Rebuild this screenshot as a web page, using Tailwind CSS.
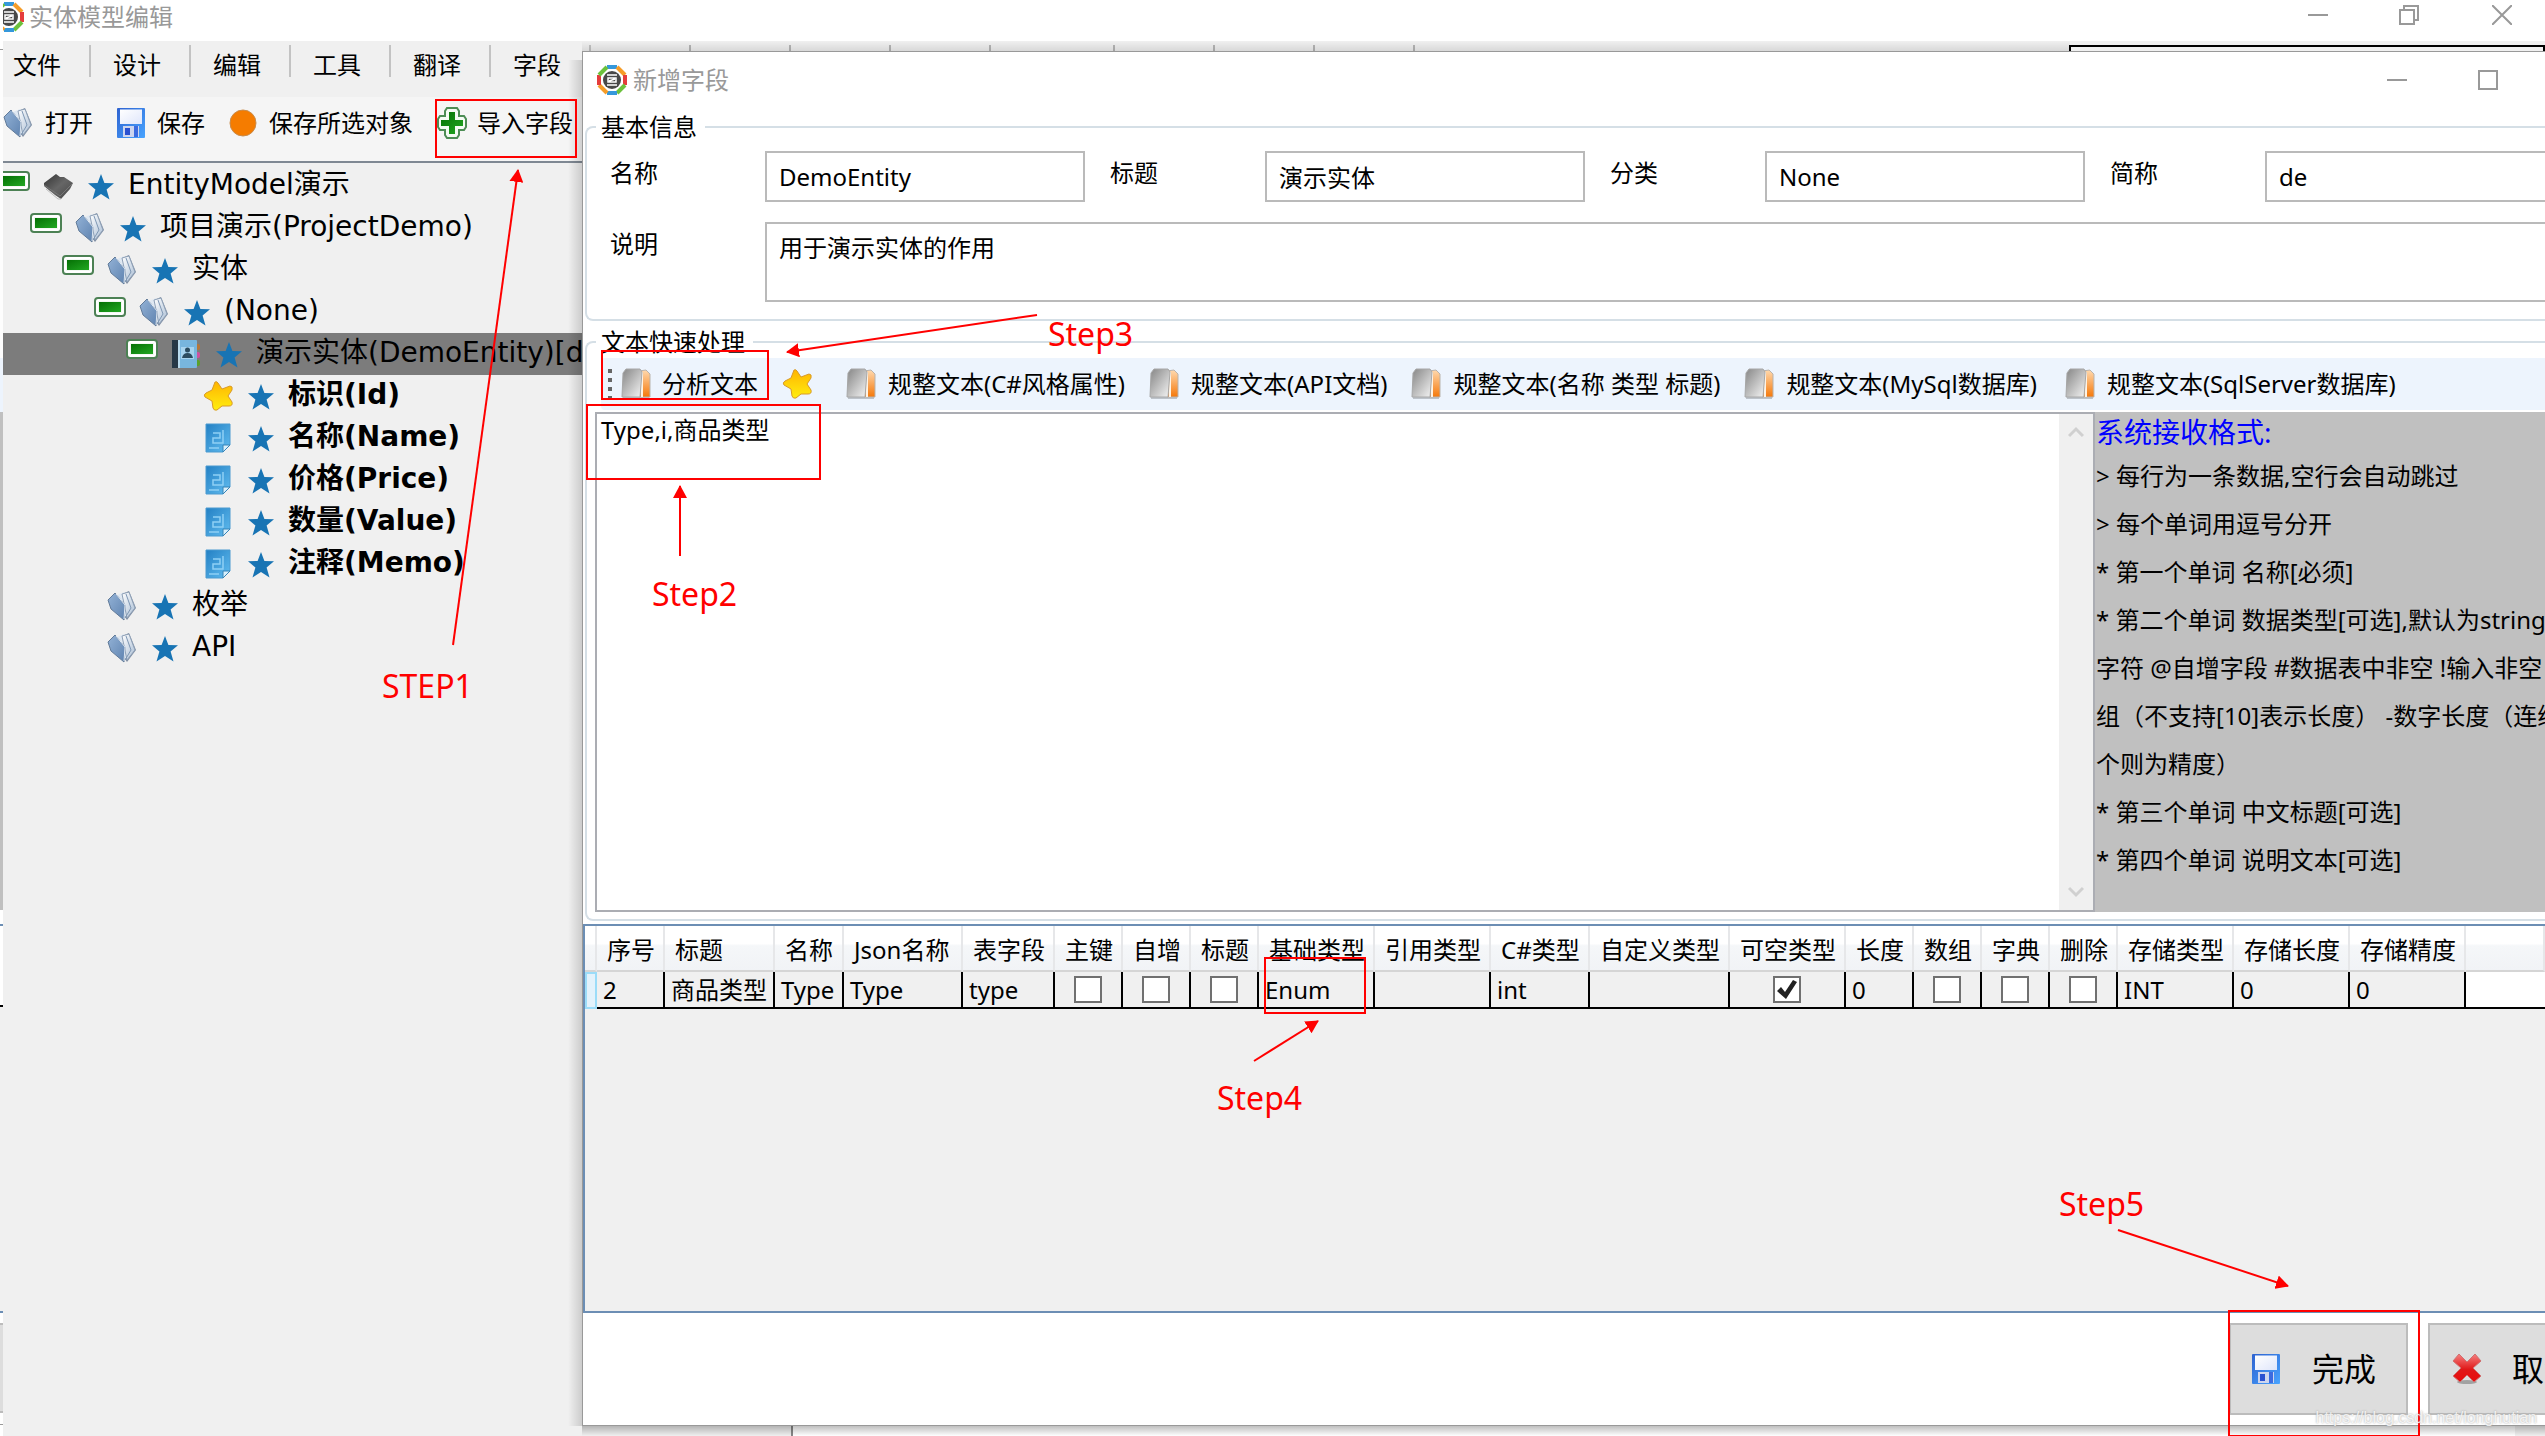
<!DOCTYPE html>
<html lang="zh-CN">
<head>
<meta charset="utf-8">
<title>实体模型编辑</title>
<script src="https://cdn.jsdelivr.net/npm/@tailwindcss/browser@4"></script>
</head>
<body class="relative min-h-screen overflow-hidden bg-white font-['Noto_Sans','Noto_Sans_CJK_SC',sans-serif] text-2xl leading-8 text-black">

<!-- Shared icon symbols -->
<svg class="absolute h-0 w-0" aria-hidden="true">
  <defs>
    <linearGradient id="g-book" x1="0" y1="0" x2="1" y2="1"><stop offset="0" stop-color="#93b2d6"/><stop offset="1" stop-color="#5f83b0"/></linearGradient>
    <linearGradient id="g-page" x1="0" y1="0" x2="1" y2="1"><stop offset="0" stop-color="#fff"/><stop offset="1" stop-color="#a9bdd4"/></linearGradient>
    <linearGradient id="g-green" x1="0" y1="0" x2="1" y2="1"><stop offset="0" stop-color="#057005"/><stop offset="1" stop-color="#22a822"/></linearGradient>
    <linearGradient id="g-floppy" x1="0" y1="0" x2="1" y2="1"><stop offset="0" stop-color="#2e62d0"/><stop offset="1" stop-color="#48a4ff"/></linearGradient>
    <linearGradient id="g-label" x1="0" y1="0" x2="1" y2="1"><stop offset="0" stop-color="#fff"/><stop offset="1" stop-color="#dfe6fb"/></linearGradient>
    <linearGradient id="g-star" x1="0" y1="0" x2="0" y2="1"><stop offset="0" stop-color="#ffb400"/><stop offset="1" stop-color="#ffee10"/></linearGradient>
    <linearGradient id="g-note" x1="0" y1="0" x2="1" y2="1"><stop offset="0" stop-color="#2380c4"/><stop offset="1" stop-color="#62bdf0"/></linearGradient>
    <linearGradient id="g-grey" x1="0" y1="0" x2="1" y2="1"><stop offset="0" stop-color="#858585"/><stop offset="1" stop-color="#f5f5f5"/></linearGradient>
    <linearGradient id="g-orange" x1="0" y1="0" x2="0" y2="1"><stop offset="0" stop-color="#ffd9ae"/><stop offset="1" stop-color="#f5780a"/></linearGradient>
    <linearGradient id="g-red" x1="0" y1="0" x2="0" y2="1"><stop offset="0" stop-color="#f58080"/><stop offset="0.55" stop-color="#e01818"/><stop offset="1" stop-color="#e80c0c"/></linearGradient>
    <linearGradient id="g-dark" x1="0" y1="0" x2="1" y2="1"><stop offset="0" stop-color="#333"/><stop offset="0.5" stop-color="#666"/><stop offset="1" stop-color="#444"/></linearGradient>
    <symbol id="i-book" viewBox="0 0 30 30">
      <path d="M13 4 22 0 29 17 20 29 12 18Z" fill="#7f8ea3"/>
      <path d="M10 4 17 1 24 16 17 28Z" fill="#dfe8f2"/>
      <path d="M15 3 22 1 28 17 20 27Z" fill="url(#g-page)" stroke="#8ea0b6"/>
      <path d="M19 3 24 17 18 27" fill="none" stroke="#7e97b4"/>
      <path d="M1 9 8 2 18 14 17 29 4 18Z" fill="url(#g-book)" stroke="#627b99"/>
      <path d="M9 3 18 14 17 28" fill="none" stroke="#dce7f3"/>
    </symbol>
    <symbol id="i-chip" viewBox="0 0 30 30">
      <path d="M1 12 13 3 17 6 21 6 30 12 27 18 18 28 12 24 7 20 1 15Z" fill="url(#g-dark)"/>
      <path d="M1 14 17 25 29 13" fill="none" stroke="#777"/>
      <path d="M3 18 15 28 18 28" fill="none" stroke="#bbb"/>
    </symbol>
    <symbol id="i-bluestar" viewBox="0 0 26 26"><path d="M13 0 16.4 9 26 9.3 18.6 15.5 21.5 25.5 13 20 4.5 25.5 7.4 15.5 0 9.3 9.6 9Z" fill="#1874b4"/></symbol>
    <symbol id="i-minus" viewBox="0 0 32 20">
      <rect x="1" y="1" width="30" height="18" rx="3" fill="#fff" stroke="#4c8154" stroke-width="2"/>
      <rect x="4" y="4" width="24" height="12" fill="#f3f8f3"/>
      <rect x="5" y="5" width="22" height="10" fill="url(#g-green)"/>
    </symbol>
    <symbol id="i-floppy" viewBox="0 0 28 30">
      <rect x="0" y="0" width="28" height="30" rx="1" fill="url(#g-floppy)"/>
      <rect x="3" y="1.5" width="22" height="14.500" fill="url(#g-label)"/>
      <rect x="6" y="18" width="16" height="11" fill="#cdd5ee"/>
      <rect x="8" y="20" width="5" height="7" fill="#2a50d0"/>
      <rect x="17" y="18" width="4" height="11" fill="#3c6be0"/>
    </symbol>
    <symbol id="i-plus" viewBox="0 0 30 32">
      <path d="M10 1H20L22 4V9H27L29 12V20L27 23H22V28L20 31H10L8 28V23H3L1 20V12L3 9H8V4Z" fill="#f4fbf4" stroke="#4d8d55" stroke-width="2"/>
      <path d="M12 5H18V13H26V19H18V27H12V19H4V13H12Z" fill="url(#g-green)"/>
    </symbol>
    <symbol id="i-gold" viewBox="0 0 30 30"><path d="M12 1 Q14 0 15 2L19 8 27 5Q30 5 29 9L25 15 29 21Q30 25 26 25L19 25 14 29Q11 30 10 27L9 20 2 16Q0 14 3 12L9 9Z" fill="url(#g-star)" stroke="#d89a2a"/></symbol>
    <symbol id="i-note" viewBox="0 0 26 30">
      <path d="M1 1H25V22L18 29H1Z" fill="url(#g-note)" stroke="#4a9ad0"/>
      <path d="M25 22 18 29V22Z" fill="#d8effb" stroke="#3584b8"/>
      <path d="M8 10H15V15H8V20H18V7M4 25H14" fill="none" stroke="#8fd0f5" stroke-width="1.500"/>
    </symbol>
    <symbol id="i-contact" viewBox="0 0 30 30">
      <rect x="24" y="5" width="5" height="6" rx="2" fill="#b5763a"/><rect x="24" y="13" width="5" height="6" rx="2" fill="#d050a0"/><rect x="24" y="21" width="5" height="6" rx="2" fill="#5aa02c"/>
      <rect x="1" y="1" width="25" height="28" rx="1" fill="#78b6de"/>
      <rect x="1" y="1" width="6" height="28" fill="#273846"/><rect x="7" y="1" width="2" height="28" fill="#b9dbee"/>
      <rect x="10" y="8" width="13" height="12" fill="#a7d3ee"/>
      <circle cx="16.500" cy="11" r="2.500" fill="#2c4c60"/><path d="M11 19Q12 14 16.500 14T22 19Z" fill="#2c4c60"/>
    </symbol>
    <symbol id="i-doc" viewBox="0 0 30 32">
      <path d="M2 29H28V31H2Z" fill="#0003"/>
      <path d="M18 3 25 2 29 6V29H18Z" fill="url(#g-orange)" stroke="#b9b3ad"/>
      <path d="M21 4V29" stroke="#fff3e4" stroke-width="2"/>
      <path d="M5 1H19L21 4 19 29H1L2 5Z" fill="url(#g-grey)" stroke="#a8a8a8"/>
    </symbol>
    <symbol id="i-cross" viewBox="0 0 30 32">
      <ellipse cx="15" cy="29" rx="10" ry="2" fill="#0004"/>
      <path d="M7 1 15 9 23 1 29 8 21 15 29 23 22 29 15 22 8 29 1 23 9 15 1 8Z" fill="url(#g-red)" stroke="#d07070"/>
    </symbol>
    <symbol id="i-logo" viewBox="0 0 30 30">
      <circle cx="15" cy="15" r="11" fill="#fff"/>
      <g fill="none" stroke-width="4">
        <path d="M10 2H20" stroke="#3598db"/><path d="M20 2 28 10" stroke="#f59c28"/><path d="M28 10V20" stroke="#e53c3c"/><path d="M28 20 20 28" stroke="#6cc13c"/>
        <path d="M20 28H10" stroke="#3598db"/><path d="M10 28 2 20" stroke="#f59c28"/><path d="M2 20V10" stroke="#e53c3c"/><path d="M2 10 10 2" stroke="#6cc13c"/>
      </g>
      <circle cx="15" cy="15" r="9" fill="#484848"/>
      <path d="M10 10H20M10 20H20M11 13V17H19V13ZM12 16 18 14" fill="none" stroke="#fff" stroke-width="1.500"/>
    </symbol>
  </defs>
</svg>

<div class="flex min-h-screen">
  <!-- Sliver of the window behind -->
  <div class="flex w-[3px] shrink-0 flex-col" aria-hidden="true">
    <div class="h-[50px] border-b border-[#999]"></div>
    <div class="h-[308px] bg-[#fdfdfd]"></div>
    <div class="h-[54px] bg-[#edf4fd]"></div>
    <div class="h-[498px] bg-[#c0c0c0]"></div>
    <div class="h-[14px]"></div>
    <div class="h-[83px] border-t-2 border-b-2 border-t-[#6c8eb4] border-b-black"></div>
    <div class="h-[306px] border-b-2 border-[#6c8eb4] bg-[#f0f0f0]"></div>
    <div class="h-[10px]"></div>
    <div class="h-[90px] border-y-2 border-[#bcbcbc] bg-[#ddd]"></div>
    <div class="h-[12px] border-b border-[#999]"></div>
  </div>

  <!-- Main window -->
  <main class="flex min-w-0 flex-1 flex-col bg-[#f0f0f0]">
    <header class="flex h-[41px] items-start justify-between overflow-hidden bg-white">
      <div class="flex items-center">
        <svg class="-ml-[9px] mr-[5px] h-[30px] w-[30px]"><use href="#i-logo"/></svg>
        <h1 class="text-[#999] leading-[34px]">实体模型编辑</h1>
      </div>
      <div class="flex gap-[71px] pr-[33px] pt-[5px] text-[#999]">
        <button aria-label="最小化"><svg class="h-5 w-5" fill="none" stroke="currentColor" stroke-width="2"><path d="M0 10H20"/></svg></button>
        <button aria-label="还原"><svg class="h-5 w-5" fill="none" stroke="currentColor" stroke-width="2"><path d="M1 5H15V19H1ZM5 5V1H19V15H15"/></svg></button>
        <button aria-label="关闭" class="ml-[2px]"><svg class="h-5 w-5" fill="none" stroke="currentColor" stroke-width="2"><path d="M0 0 20 20M20 0 0 20"/></svg></button>
      </div>
    </header>

    <nav class="flex h-14 pt-1">
      <button class="h-8 w-[88px] border-r-2 border-[#c3c3c3] pl-2.5 text-left leading-10"><span>文件</span></button>
      <button class="h-8 w-[100px] border-r-2 border-[#c3c3c3] pl-[22px] text-left leading-10"><span>设计</span></button>
      <button class="h-8 w-[100px] border-r-2 border-[#c3c3c3] pl-[22px] text-left leading-10"><span>编辑</span></button>
      <button class="h-8 w-[100px] border-r-2 border-[#c3c3c3] pl-[22px] text-left leading-10"><span>工具</span></button>
      <button class="h-8 w-[100px] border-r-2 border-[#c3c3c3] pl-[22px] text-left leading-10"><span>翻译</span></button>
      <button class="h-8 w-[100px] border-r-2 border-[#c3c3c3] pl-[22px] text-left leading-10"><span>字段</span></button>
      <i class="h-8 w-[100px] border-r-2 border-[#b5b5b5]"></i>
      <i class="h-8 w-[100px] border-r-2 border-[#b5b5b5]"></i>
      <i class="h-8 w-[100px] border-r-2 border-[#b5b5b5]"></i>
      <i class="h-8 w-[100px] border-r-2 border-[#b5b5b5]"></i>
      <i class="h-8 w-[124px] border-r-2 border-[#b5b5b5]"></i>
      <i class="h-8 w-[100px] border-r-2 border-[#b5b5b5]"></i>
      <i class="h-8 w-[100px] border-r-2 border-[#b5b5b5]"></i>
      <i class="h-8 w-[100px] border-r-2 border-[#b5b5b5]"></i>
      <i class="ml-auto h-8 w-[476px] border-2 border-black bg-[#f0f0f0]"></i>
    </nav>

    <div class="flex h-[66px] items-start gap-6 border-b-2 border-[#7f8893] bg-[#f5f5f5] pt-2.5">
      <button class="flex items-center gap-3"><svg class="h-[30px] w-[30px]"><use href="#i-book"/></svg>打开</button>
      <button class="flex items-center gap-3"><svg class="h-[30px] w-7"><use href="#i-floppy"/></svg>保存</button>
      <button class="flex items-center gap-3"><svg class="h-7 w-7"><circle cx="14" cy="14" r="13" fill="#f57c00" stroke="#c98b4a"/></svg>保存所选对象</button>
      <button class="flex items-center gap-2.5"><svg class="h-8 w-[30px]"><use href="#i-plus"/></svg>导入字段</button>
    </div>

    <!-- Model tree -->
    <ul class="flex-1 overflow-hidden pt-0.5 font-['DejaVu_Sans','Noto_Sans_CJK_SC',sans-serif] text-[28px] leading-7 whitespace-nowrap">
      <li class="flex h-[42px] items-start pt-1.5"><svg class="-ml-[5px] h-5 w-8"><use href="#i-minus"/></svg><svg class="ml-[13px] h-[30px] w-[30px]"><use href="#i-chip"/></svg><svg class="mt-[3px] mr-3.5 ml-[15px] h-[26px] w-[26px]"><use href="#i-bluestar"/></svg><span>EntityModel演示</span></li>
      <li class="flex h-[42px] items-start pt-1.5 pl-8"><svg class="-ml-[5px] h-5 w-8"><use href="#i-minus"/></svg><svg class="ml-[13px] h-[30px] w-[30px]"><use href="#i-book"/></svg><svg class="mt-[3px] mr-3.5 ml-[15px] h-[26px] w-[26px]"><use href="#i-bluestar"/></svg><span>项目演示(ProjectDemo)</span></li>
      <li class="flex h-[42px] items-start pt-1.5 pl-16"><svg class="-ml-[5px] h-5 w-8"><use href="#i-minus"/></svg><svg class="ml-[13px] h-[30px] w-[30px]"><use href="#i-book"/></svg><svg class="mt-[3px] mr-3.5 ml-[15px] h-[26px] w-[26px]"><use href="#i-bluestar"/></svg><span>实体</span></li>
      <li class="flex h-[42px] items-start pt-1.5 pl-24"><svg class="-ml-[5px] h-5 w-8"><use href="#i-minus"/></svg><svg class="ml-[13px] h-[30px] w-[30px]"><use href="#i-book"/></svg><svg class="mt-[3px] mr-3.5 ml-[15px] h-[26px] w-[26px]"><use href="#i-bluestar"/></svg><span>(None)</span></li>
      <li class="flex h-[42px] items-start bg-[#7c7c7c] pt-1.5 pl-32"><svg class="-ml-[5px] h-5 w-8"><use href="#i-minus"/></svg><svg class="ml-[13px] h-[30px] w-[30px]"><use href="#i-contact"/></svg><svg class="mt-[3px] mr-3.5 ml-[15px] h-[26px] w-[26px]"><use href="#i-bluestar"/></svg><span>演示实体(DemoEntity)[de]</span></li>
      <li class="flex h-[42px] items-start pt-1.5 pl-[200px] font-bold"><svg class="h-[30px] w-[30px]"><use href="#i-gold"/></svg><svg class="mt-[3px] mr-3.5 ml-[15px] h-[26px] w-[26px]"><use href="#i-bluestar"/></svg><span>标识(Id)</span></li>
      <li class="flex h-[42px] items-start pt-1.5 pl-[200px] font-bold"><svg class="h-[30px] w-[30px]"><use href="#i-note"/></svg><svg class="mt-[3px] mr-3.5 ml-[15px] h-[26px] w-[26px]"><use href="#i-bluestar"/></svg><span>名称(Name)</span></li>
      <li class="flex h-[42px] items-start pt-1.5 pl-[200px] font-bold"><svg class="h-[30px] w-[30px]"><use href="#i-note"/></svg><svg class="mt-[3px] mr-3.5 ml-[15px] h-[26px] w-[26px]"><use href="#i-bluestar"/></svg><span>价格(Price)</span></li>
      <li class="flex h-[42px] items-start pt-1.5 pl-[200px] font-bold"><svg class="h-[30px] w-[30px]"><use href="#i-note"/></svg><svg class="mt-[3px] mr-3.5 ml-[15px] h-[26px] w-[26px]"><use href="#i-bluestar"/></svg><span>数量(Value)</span></li>
      <li class="flex h-[42px] items-start pt-1.5 pl-[200px] font-bold"><svg class="h-[30px] w-[30px]"><use href="#i-note"/></svg><svg class="mt-[3px] mr-3.5 ml-[15px] h-[26px] w-[26px]"><use href="#i-bluestar"/></svg><span>注释(Memo)</span></li>
      <li class="flex h-[42px] items-start pt-1.5 pl-[104px]"><svg class="h-[30px] w-[30px]"><use href="#i-book"/></svg><svg class="mt-[3px] mr-3.5 ml-[15px] h-[26px] w-[26px]"><use href="#i-bluestar"/></svg><span>枚举</span></li>
      <li class="flex h-[42px] items-start pt-1.5 pl-[104px]"><svg class="h-[30px] w-[30px]"><use href="#i-book"/></svg><svg class="mt-[3px] mr-3.5 ml-[15px] h-[26px] w-[26px]"><use href="#i-bluestar"/></svg><span>API</span></li>
    </ul>
    <div class="ml-[788px] mr-[30px] h-[10px] border-l-2 border-[#888] bg-white"></div>
  </main>
</div>

<!-- Dialog window -->
<section class="absolute top-[51px] right-0 bottom-[10px] left-[582px] flex flex-col overflow-hidden border-y border-l border-[#999] bg-white" role="dialog" aria-labelledby="dlg-title">
  <header class="flex h-[61px] shrink-0 items-start justify-between">
    <div class="flex items-center gap-1.5 pt-3 pl-3.5">
      <svg class="h-[30px] w-[30px]"><use href="#i-logo"/></svg>
      <h2 id="dlg-title" class="text-[#999]">新增字段</h2>
    </div>
    <div class="flex gap-[71px] pt-[18px] pr-[47px] text-[#999]">
      <button aria-label="最小化"><svg class="h-5 w-5" fill="none" stroke="currentColor" stroke-width="2"><path d="M0 10H20"/></svg></button>
      <button aria-label="最大化"><svg class="h-5 w-5" fill="none" stroke="currentColor" stroke-width="2"><path d="M1 1H19V19H1Z"/></svg></button>
    </div>
  </header>

  <fieldset class="ml-0.5 shrink-0 rounded-l-lg border-2 border-r-0 border-[#d5dfe6] pb-[17px] pl-[23px]">
    <legend class="-ml-[14px] pr-2 pl-[5px] leading-7">基本信息</legend>
    <div class="grid grid-cols-[500px_500px_500px_1fr] pt-2.5">
      <div class="flex"><label for="f-name" class="w-[155px] pt-1.5">名称</label><input id="f-name" value="DemoEntity" class="h-[51px] w-[320px] border-2 border-[#bababa] px-3"></div>
      <div class="flex"><label for="f-title" class="w-[155px] pt-1.5">标题</label><input id="f-title" value="演示实体" class="h-[51px] w-[320px] border-2 border-[#bababa] px-3"></div>
      <div class="flex"><label for="f-cat" class="w-[155px] pt-1.5">分类</label><input id="f-cat" value="None" class="h-[51px] w-[320px] border-2 border-[#bababa] px-3"></div>
      <div class="flex min-w-0"><label for="f-short" class="w-[155px] shrink-0 pt-1.5">简称</label><input id="f-short" value="de" class="h-[51px] min-w-0 flex-1 border-2 border-r-0 border-[#bababa] px-3"></div>
    </div>
    <div class="flex pt-5"><label for="f-memo" class="w-[155px] shrink-0 pt-1.5">说明</label><textarea id="f-memo" class="h-20 flex-1 resize-none border-2 border-r-0 border-[#bababa] px-3 py-2">用于演示实体的作用</textarea></div>
  </fieldset>

  <fieldset class="mt-[7px] ml-0.5 min-w-0 shrink-0 rounded-l-lg border-2 border-r-0 border-[#d5dfe6] pb-[7px] pl-2">
    <legend class="ml-px pr-2 pl-[5px] leading-7">文本快速处理</legend>
    <div class="mt-0.5 ml-1.5 flex h-[52px] items-center gap-6 rounded-l bg-[#edf4fd] pl-[7px] whitespace-nowrap">
      <button class="flex items-center gap-3"><svg class="-mr-[3px] h-[30px] w-1" stroke="#666" stroke-width="4" stroke-dasharray="4 5"><path d="M2 0V30"/></svg><svg class="-mr-px h-8 w-[30px]"><use href="#i-doc"/></svg>分析文本</button>
      <button aria-label="收藏" class="mr-2.5"><svg class="h-[30px] w-[30px]"><use href="#i-gold"/></svg></button>
      <button class="flex items-center gap-3"><svg class="h-8 w-[30px]"><use href="#i-doc"/></svg>规整文本(C#风格属性)</button>
      <button class="flex items-center gap-3"><svg class="h-8 w-[30px]"><use href="#i-doc"/></svg>规整文本(API文档)</button>
      <button class="flex items-center gap-3"><svg class="h-8 w-[30px]"><use href="#i-doc"/></svg>规整文本(名称 类型 标题)</button>
      <button class="flex items-center gap-3"><svg class="h-8 w-[30px]"><use href="#i-doc"/></svg>规整文本(MySql数据库)</button>
      <button class="ml-1 flex items-center gap-3"><svg class="h-8 w-[30px]"><use href="#i-doc"/></svg>规整文本(SqlServer数据库)</button>
    </div>
    <div class="mt-0.5 flex h-[500px]">
      <div class="flex min-w-0 flex-1 border-2 border-[#abadb3]">
        <textarea aria-label="文本" class="min-w-0 flex-1 resize-none px-1">Type,i,商品类型</textarea>
        <div class="flex w-[34px] flex-col items-center justify-between bg-[#f0f0f0] py-3 text-[#d0d0d0]">
          <svg class="h-3 w-4" fill="none" stroke="currentColor" stroke-width="3"><path d="M1 10 8 3 15 10"/></svg>
          <svg class="h-3 w-4" fill="none" stroke="currentColor" stroke-width="3"><path d="M1 2 8 9 15 2"/></svg>
        </div>
      </div>
      <div class="w-[450px] shrink-0 overflow-hidden bg-[#c0c0c0] pl-px leading-[48px] whitespace-nowrap">
        <h3 class="text-[28px] leading-10 text-[#00f]">系统接收格式:</h3>
        <p>&gt; 每行为一条数据,空行会自动跳过</p>
        <p>&gt; 每个单词用逗号分开</p>
        <p>* 第一个单词 名称[必须]</p>
        <p>* 第二个单词 数据类型[可选],默认为string</p>
        <p>字符 @自增字段 #数据表中非空 !输入非空</p>
        <p>组（不支持[10]表示长度） -数字长度（连续</p>
        <p>个则为精度）</p>
        <p>* 第三个单词 中文标题[可选]</p>
        <p>* 第四个单词 说明文本[可选]</p>
      </div>
    </div>
  </fieldset>

  <!-- Field grid -->
  <div class="mt-[3px] min-h-0 flex-1 border-y-2 border-l-2 border-[#6c8eb4] bg-[#f0f0f0]">
    <table class="w-full table-fixed border-separate border-spacing-0 text-left whitespace-nowrap">
      <colgroup><col class="w-3"><col class="w-[68px]"><col class="w-[110px]"><col class="w-[69px]"><col class="w-[119px]"><col class="w-[92px]"><col class="w-[68px]"><col class="w-[68px]"><col class="w-[68px]"><col class="w-[116px]"><col class="w-[116px]"><col class="w-[99px]"><col class="w-[140px]"><col class="w-[116px]"><col class="w-[68px]"><col class="w-[68px]"><col class="w-[68px]"><col class="w-[68px]"><col class="w-[116px]"><col class="w-[116px]"><col class="w-[116px]"><col></colgroup>
      <thead>
        <tr class="h-[46px] *:border-r-2 *:border-b-2 *:border-r-[#e6e7e9] *:border-b-[#d5d5d5] *:bg-linear-to-b *:from-white *:from-40% *:via-[#f5f7f9] *:via-45% *:to-[#f1f3f6] *:pt-1 *:pl-2.5 *:font-normal">
          <td></td><th>序号</th><th>标题</th><th>名称</th><th>Json名称</th><th>表字段</th><th>主键</th><th>自增</th><th>标题</th><th>基础类型</th><th>引用类型</th><th>C#类型</th><th>自定义类型</th><th>可空类型</th><th>长度</th><th>数组</th><th>字典</th><th>删除</th><th>存储类型</th><th>存储长度</th><th>存储精度</th><td></td>
        </tr>
      </thead>
      <tbody>
        <tr class="h-[37px] *:border-r-2 *:border-b-2 *:border-black *:pl-1.5">
          <td class="border-2 border-[#9bdcf8]! bg-[#e3f2fb]"></td>
          <td>2</td><td>商品类型</td><td>Type</td><td>Type</td><td>type</td>
          <td class="pl-0!"><input type="checkbox" aria-label="主键" class="mx-auto block h-[27px] w-7 appearance-none border-2 border-[#707070] bg-white"></td>
          <td class="pl-0!"><input type="checkbox" aria-label="自增" class="mx-auto block h-[27px] w-7 appearance-none border-2 border-[#707070] bg-white"></td>
          <td class="pl-0!"><input type="checkbox" aria-label="标题" class="mx-auto block h-[27px] w-7 appearance-none border-2 border-[#707070] bg-white"></td>
          <td>Enum</td><td></td><td>int</td><td></td>
          <td class="pl-0!"><div class="relative mx-auto h-[27px] w-7"><input type="checkbox" checked aria-label="可空类型" class="block h-[27px] w-7 appearance-none border-2 border-[#707070] bg-white"><svg class="pointer-events-none absolute inset-0 h-[27px] w-7"><path d="M4 15 8 11 12 16 20 4 24 6 13 23Z" fill="#222"/></svg></div></td>
          <td>0</td>
          <td class="pl-0!"><input type="checkbox" aria-label="数组" class="mx-auto block h-[27px] w-7 appearance-none border-2 border-[#707070] bg-white"></td>
          <td class="pl-0!"><input type="checkbox" aria-label="字典" class="mx-auto block h-[27px] w-7 appearance-none border-2 border-[#707070] bg-white"></td>
          <td class="pl-0!"><input type="checkbox" aria-label="删除" class="mx-auto block h-[27px] w-7 appearance-none border-2 border-[#707070] bg-white"></td>
          <td>INT</td><td>0</td><td>0</td><td class="border-r-0! bg-white"></td>
        </tr>
      </tbody>
    </table>
  </div>

  <footer class="flex h-28 shrink-0 items-start justify-end gap-5 pt-2.5 text-[32px] leading-10">
    <button class="flex h-[92px] w-[179px] items-center gap-8 border-2 border-[#bcbcbc] bg-[#ddd] pl-[21px]"><svg class="h-[30px] w-7"><use href="#i-floppy"/></svg>完成</button>
    <button class="flex h-[92px] w-[117px] items-center gap-[30px] overflow-hidden border-2 border-r-0 border-[#bcbcbc] bg-[#ddd] pl-[22px] whitespace-nowrap"><svg class="h-8 w-[30px] shrink-0"><use href="#i-cross"/></svg><span>取消</span></button>
  </footer>
</section>

<!-- Shadow the dialog casts on the main window -->
<div class="absolute top-[41px] right-[475px] left-[582px] h-[10px] bg-linear-to-b from-black/0 to-black/10"></div>
<div class="absolute top-[60px] bottom-[10px] left-[568px] w-3.5 bg-linear-to-r from-black/0 to-black/15"></div>
<div class="absolute right-0 bottom-0 left-[582px] h-[10px] bg-linear-to-b from-black/25 to-black/0"></div>

<!-- Walkthrough annotations drawn over both windows -->
<svg class="pointer-events-none absolute top-0 left-0 h-full w-full" fill="none" stroke="#f00" stroke-width="2">
  <defs><marker id="tip" viewBox="0 0 13 14" refX="12" refY="7" markerWidth="13" markerHeight="14" markerUnits="userSpaceOnUse" orient="auto"><path d="M0 0 13 7 0 14Z" fill="#f00" stroke="none"/></marker></defs>
  <rect x="436" y="100" width="140" height="57"/>
  <rect x="602" y="351" width="166" height="48"/>
  <rect x="587" y="405" width="233" height="74"/>
  <rect x="1265" y="958" width="100" height="55"/>
  <rect x="2229" y="1311" width="190" height="125"/>
  <path d="M453 645 518 170" marker-end="url(#tip)"/>
  <path d="M680 556V486" marker-end="url(#tip)"/>
  <path d="M1037 315 787 352" marker-end="url(#tip)"/>
  <path d="M1254 1061 1318 1021" marker-end="url(#tip)"/>
  <path d="M2118 1230 2288 1286" marker-end="url(#tip)"/>
  <g fill="#f00" stroke="none" font-size="32">
    <text x="382" y="698">STEP1</text>
    <text x="652" y="606">Step2</text>
    <text x="1048" y="346">Step3</text>
    <text x="1217" y="1110">Step4</text>
    <text x="2059" y="1216">Step5</text>
  </g>
</svg>
<p class="absolute right-2 bottom-1.5 font-['Liberation_Sans',sans-serif] text-base leading-6 text-white/80 [text-shadow:0_0_2px_#999]">https://blog.csdn.net/longhutian</p>
</body>
</html>
